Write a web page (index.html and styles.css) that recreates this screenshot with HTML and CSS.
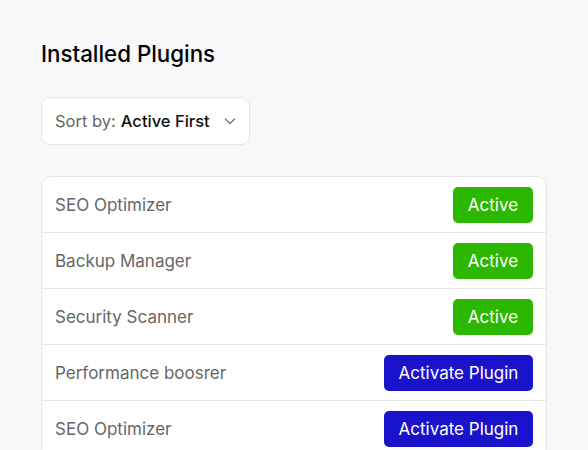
FILE: index.html
```html
<!DOCTYPE html>
<html>
<head>
<meta charset="utf-8">
<link rel="stylesheet" href="styles.css">
</head>
<body>
<div class="page">
  <h1 class="title">Installed Plugins</h1>
  <div class="sort">
    <span class="sort-label">Sort by:</span>
    <span class="sort-value">Active First</span>
    <svg class="chev" width="12" height="8" viewBox="0 0 12 8"><path d="M1 1.5 L6 6.5 L11 1.5" fill="none" stroke="#777" stroke-width="1.3"/></svg>
  </div>
  <div class="list">
    <div class="row"><span class="name">SEO Optimizer</span><span class="btn active">Active</span></div>
    <div class="row"><span class="name">Backup Manager</span><span class="btn active">Active</span></div>
    <div class="row"><span class="name">Security Scanner</span><span class="btn active">Active</span></div>
    <div class="row"><span class="name">Performance boosrer</span><span class="btn activate">Activate Plugin</span></div>
    <div class="row"><span class="name">SEO Optimizer</span><span class="btn activate">Activate Plugin</span></div>
  </div>
</div>
</body>
</html>
```
FILE: styles.css
```css
html, body {
  margin: 0;
  padding: 0;
  background: #f8f8fa;
  font-family: Inter, "Liberation Sans", sans-serif;
}
.page {
  padding: 39px 41px 0 41px;
  width: 506px;
}
.title {
  margin: 0;
  font-size: 22.3px;
  font-weight: 500;
  color: #000;
  line-height: 29px;
}
.sort {
  margin-top: 29px;
  display: inline-flex;
  align-items: center;
  height: 46px;
  width: 207px;
  box-sizing: content-box;
  border: 1px solid #e6e6ea;
  border-radius: 9px;
  background: #fff;
  font-size: 16.5px;
}
.sort-label {
  margin-left: 13px;
  color: #666;
}
.sort-value {
  margin-left: 5px;
  color: #111;
  font-weight: 500;
}
.chev {
  margin-left: auto;
  margin-right: 13px;
}
.list {
  margin-top: 31px;
  background: #fff;
  border: 1px solid #e6e6ea;
  border-radius: 10px;
  overflow: hidden;
}
.row {
  display: flex;
  align-items: center;
  justify-content: space-between;
  height: 55px;
  padding: 0 13px 0 13px;
  border-bottom: 1px solid #e8e8ea;
}
.name {
  font-size: 17px;
  color: #666;
}
.btn {
  height: 36px;
  display: inline-flex;
  align-items: center;
  justify-content: center;
  border-radius: 5px;
  color: #fff;
  font-size: 17px;
  font-weight: 400;
}
.btn.active {
  width: 80px;
  background: #2cb800;
}
.btn.activate {
  width: 149px;
  background: #1a13cc;
}
```
